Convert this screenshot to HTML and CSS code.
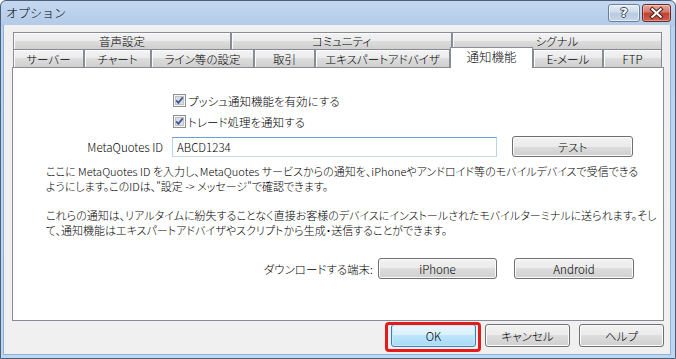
FILE: index.html
```html
<!DOCTYPE html>
<html lang="ja">
<head>
  <meta charset="UTF-8">
  <title>オプション</title>
  <link rel="stylesheet" href="styles.css">
</head>
<body>
  <div class="window">
    <div class="titlebar">
      <span class="title">オプション</span>
      <div class="caption-btns">
        <span class="cap-btn help"><span class="q">?</span></span>
        <span class="cap-btn close">
          <svg width="29" height="18" viewBox="0 0 29 18">
            <path d="M10 5 L19 13 M19 5 L10 13" stroke="#4a2420" stroke-width="4.4" stroke-linecap="square" fill="none"/>
            <path d="M10 5 L19 13 M19 5 L10 13" stroke="#fff" stroke-width="2.2" stroke-linecap="square" fill="none"/>
          </svg>
        </span>
      </div>
    </div>

    <div class="client">
      <div class="tabs">
        <div class="tab-row top">
          <div class="tab" style="width:218px">音声設定</div>
          <div class="tab" style="width:221px">コミュニティ</div>
          <div class="tab" style="width:210px">シグナル</div>
        </div>
        <div class="tab-row bottom">
          <div class="tab" style="width:71px">サーバー</div>
          <div class="tab" style="width:67px">チャート</div>
          <div class="tab" style="width:103px">ライン等の設定</div>
          <div class="tab" style="width:61px">取引</div>
          <div class="tab" style="width:135px">エキスパートアドバイザ</div>
          <div class="tab active" style="width:83px">通知機能</div>
          <div class="tab" style="width:70px">E-メール</div>
          <div class="tab" style="width:59px">FTP</div>
        </div>

        <div class="panel">
          <label class="check-row">
            <svg class="cb" width="13" height="13" viewBox="0 0 13 13">
              <rect x="0.5" y="0.5" width="12" height="12" fill="#f6f6f6" stroke="#8e8f8f"/>
              <rect x="2.5" y="2.5" width="8" height="8" fill="#dedede" stroke="#c2c2c2"/>
              <path d="M3.2 6.3 L5.4 8.8 L9.8 3.4" stroke="#3d5a9c" stroke-width="1.8" fill="none"/>
            </svg>
            <span>プッシュ通知機能を有効にする</span>
          </label>
          <label class="check-row">
            <svg class="cb" width="13" height="13" viewBox="0 0 13 13">
              <rect x="0.5" y="0.5" width="12" height="12" fill="#f6f6f6" stroke="#8e8f8f"/>
              <rect x="2.5" y="2.5" width="8" height="8" fill="#dedede" stroke="#c2c2c2"/>
              <path d="M3.2 6.3 L5.4 8.8 L9.8 3.4" stroke="#3d5a9c" stroke-width="1.8" fill="none"/>
            </svg>
            <span>トレード処理を通知する</span>
          </label>

          <div class="id-row">
            <span class="id-label">MetaQuotes ID</span>
            <div class="input">ABCD1234</div>
            <button class="btn test">テスト</button>
          </div>

          <p class="note first">ここに MetaQuotes ID を入力し、MetaQuotes サービスからの通知を、iPhoneやアンドロイド等のモバイルデバイスで受信できる<br>ようにします。このIDは、"設定 -&gt; メッセージ"で確認できます。</p>
          <p class="note second">これらの通知は、リアルタイムに紛失することなく直接お客様のデバイスにインストールされたモバイルターミナルに送られます。そし<br>て、通知機能はエキスパートアドバイザやスクリプトから生成・送信することができます。</p>

          <div class="dl-row">
            <span class="dl-label">ダウンロードする端末:</span>
            <button class="btn dl">iPhone</button>
            <button class="btn dl android">Android</button>
          </div>
        </div>
      </div>

      <div class="footer">
        <span class="ok-wrap"><button class="btn ok">OK</button></span>
        <button class="btn">キャンセル</button>
        <button class="btn">ヘルプ</button>
      </div>
    </div>
  </div>
</body>
</html>
```

FILE: styles.css
```css
* {
  margin: 0;
  padding: 0;
  box-sizing: border-box;
}

body {
  font-family: "Noto Sans CJK JP", "Liberation Sans", sans-serif;
  font-size: 11.5px;
  font-weight: 300;
  font-feature-settings: "palt";
  color: #000;
  background: #fff;
}

.window {
  width: 676px;
  height: 359px;
  display: flex;
  flex-direction: column;
  border: 1px solid #4a5f7a;
  border-top-left-radius: 6px;
  border-top-right-radius: 6px;
  background: linear-gradient(#c4d8f0, #b3cbe8 24px, #bcd3ee 26px, #c0d6ef);
  padding: 0 4px 3px 2px;
}

/* title bar */
.titlebar {
  height: 24px;
  display: flex;
  align-items: flex-start;
  justify-content: space-between;
}

.title {
  margin: 5px 0 0 3px;
  font-size: 12px;
  line-height: 14px;
  font-feature-settings: normal;
}

.caption-btns {
  display: flex;
  gap: 2px;
  margin-top: 3px;
}

.cap-btn {
  height: 18px;
  border-radius: 3px;
  display: flex;
  align-items: center;
  justify-content: center;
}

.help {
  width: 32px;
  border: 1px solid #6c7f9b;
  background: linear-gradient(#e4ecf6, #cfdcec 45%, #b8cbe2 50%, #c6d6ea);
  box-shadow: inset 0 0 0 1px rgba(255,255,255,0.55);
}

.help .q {
  color: #fff;
  font: bold 13px "DejaVu Sans", sans-serif;
  line-height: 14px;
  text-shadow: 1px 0 0 #3a4658, -1px 0 0 #3a4658, 0 1px 0 #3a4658, 0 -1px 0 #3a4658;
}

.close {
  width: 29px;
  border: 1px solid #6b2b24;
  background: linear-gradient(#e7a89e, #d4776a 45%, #c0402f 50%, #cf5f4c);
  box-shadow: inset 0 0 0 1px rgba(255,255,255,0.35);
}

/* client area */
.client {
  flex: 1;
  background: #f0f0f0;
  border: 1px solid #8ab1da;
  border-top: none;
  padding: 7px 6px 0 8px;
  display: flex;
  flex-direction: column;
}

.tabs {
  display: flex;
  flex-direction: column;
}

.tab-row {
  display: flex;
  margin-left: 1px;
}

.tab {
  display: flex;
  align-items: center;
  justify-content: center;
  border: 1px solid #898c95;
  border-bottom: none;
  background: linear-gradient(#f3f3f3, #ebebeb 50%, #dddddd 50%, #cfcfcf);
  box-shadow: inset 1px 1px 0 #fcfcfc;
  white-space: nowrap;
  line-height: 14px;
}

.tab-row.top .tab {
  height: 17px;
}

.tab-row.bottom .tab {
  height: 18px;
}

.tab.active {
  position: relative;
  z-index: 1;
  height: 21px !important;
  margin-top: -2px;
  margin-bottom: -1px;
  padding-bottom: 2px;
  background: #fff;
  box-shadow: none;
  font-size: 12.5px;
}

.panel {
  height: 254px;
  border: 1px solid #898c95;
  background: #fff;
  padding-top: 22px;
  display: flex;
  flex-direction: column;
}

.check-row {
  display: flex;
  align-items: center;
  gap: 2px;
  height: 21px;
  margin-left: 160px;
}

.cb {
  display: block;
  flex: none;
}

.id-row {
  display: flex;
  align-items: center;
  height: 21px;
  margin-top: 4px;
}

.id-label {
  width: 150px;
  text-align: right;
  margin-right: 9px;
}

.input {
  width: 325px;
  height: 20px;
  border: 1px solid;
  border-color: #6f9fd1 #b8d3ee #c8dcf0 #b8d3ee;
  padding: 2px 0 0 4px;
  line-height: 14px;
  margin-right: 15px;
}

.btn {
  font: inherit;
  color: #000;
  height: 21px;
  border: 1px solid #707070;
  border-radius: 3px;
  background: linear-gradient(#f2f2f2, #ebebeb 50%, #dddddd 50%, #cfcfcf);
  box-shadow: inset 0 0 0 1px #fbfbfb;
  line-height: 14px;
}

.test {
  width: 121px;
}

.note {
  margin-left: 33px;
  font-size: 11px;
  line-height: 15px;
  white-space: nowrap;
}

.note.first {
  margin-top: 7px;
}

.note.second {
  margin-top: 14px;
}

.dl-row {
  display: flex;
  align-items: center;
  justify-content: flex-end;
  margin-top: 20px;
  padding-right: 29px;
  height: 21px;
}

.dl-label {
  margin-right: 5px;
}

.dl {
  width: 119px;
}

.android {
  width: 120px;
  margin-left: 17px;
}

/* dialog buttons */
.footer {
  display: flex;
  justify-content: flex-end;
  gap: 9px;
  margin-top: 3px;
}

.footer .btn {
  width: 85px;
  height: 23px;
}

.ok-wrap {
  position: relative;
  display: flex;
}

.ok-wrap::after {
  content: '';
  position: absolute;
  left: -6px;
  right: -5px;
  top: -2px;
  bottom: -5px;
  border: 3px solid #e31b1b;
  border-radius: 4px;
}

.footer .ok {
  border-color: #3c7fb1;
  background: linear-gradient(#eaf6fd, #d9f0fc 50%, #bee6fd 50%, #a7d9f5);
  box-shadow: inset 0 0 0 1px #c9e9fa;
}
```
